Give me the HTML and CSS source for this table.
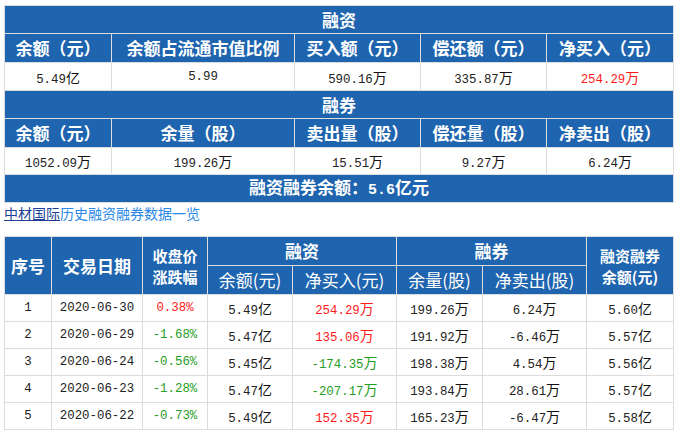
FILE: index.html
```html
<!DOCTYPE html>
<html lang="zh">
<head>
<meta charset="utf-8">
<link rel="stylesheet" href="styles.css">
</head>
<body>
<div class="page">
  <table class="summary">
    <colgroup><col style="width:107px"><col style="width:183px"><col style="width:126px"><col style="width:126px"><col style="width:127px"></colgroup>
    <tr class="title"><th colspan="5">融资</th></tr>
    <tr class="head"><th>余额（元）</th><th>余额占流通市值比例</th><th>买入额（元）</th><th>偿还额（元）</th><th>净买入（元）</th></tr>
    <tr class="data"><td>5.49<span class="u">亿</span></td><td>5.99</td><td>590.16<span class="u">万</span></td><td>335.87<span class="u">万</span></td><td class="up">254.29<span class="u">万</span></td></tr>
    <tr class="title"><th colspan="5">融券</th></tr>
    <tr class="head"><th>余额（元）</th><th>余量（股）</th><th>卖出量（股）</th><th>偿还量（股）</th><th>净卖出（股）</th></tr>
    <tr class="data short"><td>1052.09<span class="u">万</span></td><td>199.26<span class="u">万</span></td><td>15.51<span class="u">万</span></td><td>9.27<span class="u">万</span></td><td>6.24<span class="u">万</span></td></tr>
    <tr class="title"><th colspan="5">融资融券余额：<span class="num">5.6</span>亿元</th></tr>
  </table>

  <div class="link"><a class="stock" href="#">中材国际</a><span class="desc">历史融资融券数据一览</span></div>

  <table class="history">
    <colgroup><col style="width:47px"><col style="width:91px"><col style="width:65px"><col style="width:85px"><col style="width:104px"><col style="width:86px"><col style="width:104px"><col style="width:87px"></colgroup>
    <tr class="h1"><th rowspan="2">序号</th><th rowspan="2">交易日期</th><th rowspan="2" class="two"><span class="ln">收盘价</span><span class="ln">涨跌幅</span></th><th colspan="2">融资</th><th colspan="2">融券</th><th rowspan="2" class="two"><span class="ln">融资融券</span><span class="ln">余额(元)</span></th></tr>
    <tr class="h2"><th>余额(元)</th><th>净买入(元)</th><th>余量(股)</th><th>净卖出(股)</th></tr>
    <tr class="row"><td>1</td><td>2020-06-30</td><td class="up">0.38%</td><td>5.49<span class="u">亿</span></td><td class="up">254.29<span class="u">万</span></td><td>199.26<span class="u">万</span></td><td>6.24<span class="u">万</span></td><td>5.60<span class="u">亿</span></td></tr>
    <tr class="row"><td>2</td><td>2020-06-29</td><td class="down">-1.68%</td><td>5.47<span class="u">亿</span></td><td class="up">135.06<span class="u">万</span></td><td>191.92<span class="u">万</span></td><td>-6.46<span class="u">万</span></td><td>5.57<span class="u">亿</span></td></tr>
    <tr class="row"><td>3</td><td>2020-06-24</td><td class="down">-0.56%</td><td>5.45<span class="u">亿</span></td><td class="down">-174.35<span class="u">万</span></td><td>198.38<span class="u">万</span></td><td>4.54<span class="u">万</span></td><td>5.56<span class="u">亿</span></td></tr>
    <tr class="row"><td>4</td><td>2020-06-23</td><td class="down">-1.28%</td><td>5.47<span class="u">亿</span></td><td class="down">-207.17<span class="u">万</span></td><td>193.84<span class="u">万</span></td><td>28.61<span class="u">万</span></td><td>5.57<span class="u">亿</span></td></tr>
    <tr class="row"><td>5</td><td>2020-06-22</td><td class="down">-0.73%</td><td>5.49<span class="u">亿</span></td><td class="up">152.35<span class="u">万</span></td><td>165.23<span class="u">万</span></td><td>-6.47<span class="u">万</span></td><td>5.58<span class="u">亿</span></td></tr>
  </table>
</div>
</body>
</html>
```

FILE: styles.css
```css
html, body {
  margin: 0;
  padding: 0;
  background: #ffffff;
}
.page {
  padding: 5px 6px 0 4px;
  font-family: "Noto Sans CJK SC", sans-serif;
  color: #333333;
}
table {
  border-collapse: collapse;
  table-layout: fixed;
  width: 669px;
}
th, td {
  border: 1px solid #dcdcdc;
  padding: 0;
  text-align: center;
  vertical-align: middle;
  white-space: nowrap;
  overflow: hidden;
}
th {
  background: #1e64ae;
  color: #ffffff;
  font-size: 17px;
  font-weight: 700;
  line-height: 20px;
}
td {
  font-family: "Liberation Mono", "Noto Sans CJK SC", monospace;
  font-size: 12.4px;
  color: #222222;
}
.u {
  font-family: "Noto Sans CJK SC", sans-serif;
  font-size: 14px;
  color: #111111;
}
.num {
  font-family: "Liberation Mono", monospace;
  font-size: 15px;
}
.up, .up .u { color: #ff1a1a; }
.down, .down .u { color: #1f9e1f; }

.summary .title { height: 28px; }
.summary .head { height: 29px; }
.summary .data { height: 28px; }
.summary .data.short { height: 27px; }

.link {
  height: 20px;
  margin-bottom: 13px;
  font-size: 14px;
  line-height: 20px;
}
.link .stock {
  color: #1c3f96;
  text-decoration: underline;
}
.link .desc {
  color: #2a88e6;
}

.history .h1 { height: 29px; }
.history .h2 { height: 29px; }
.history .h2 th { font-weight: 400; }
.history .row { height: 27px; }
.history .two { font-size: 15px; line-height: 19px; }
.history .two .ln { display: block; line-height: 19px; height: 19px; overflow: hidden; }
.history .two .ln + .ln { margin-top: 2px; }
```
